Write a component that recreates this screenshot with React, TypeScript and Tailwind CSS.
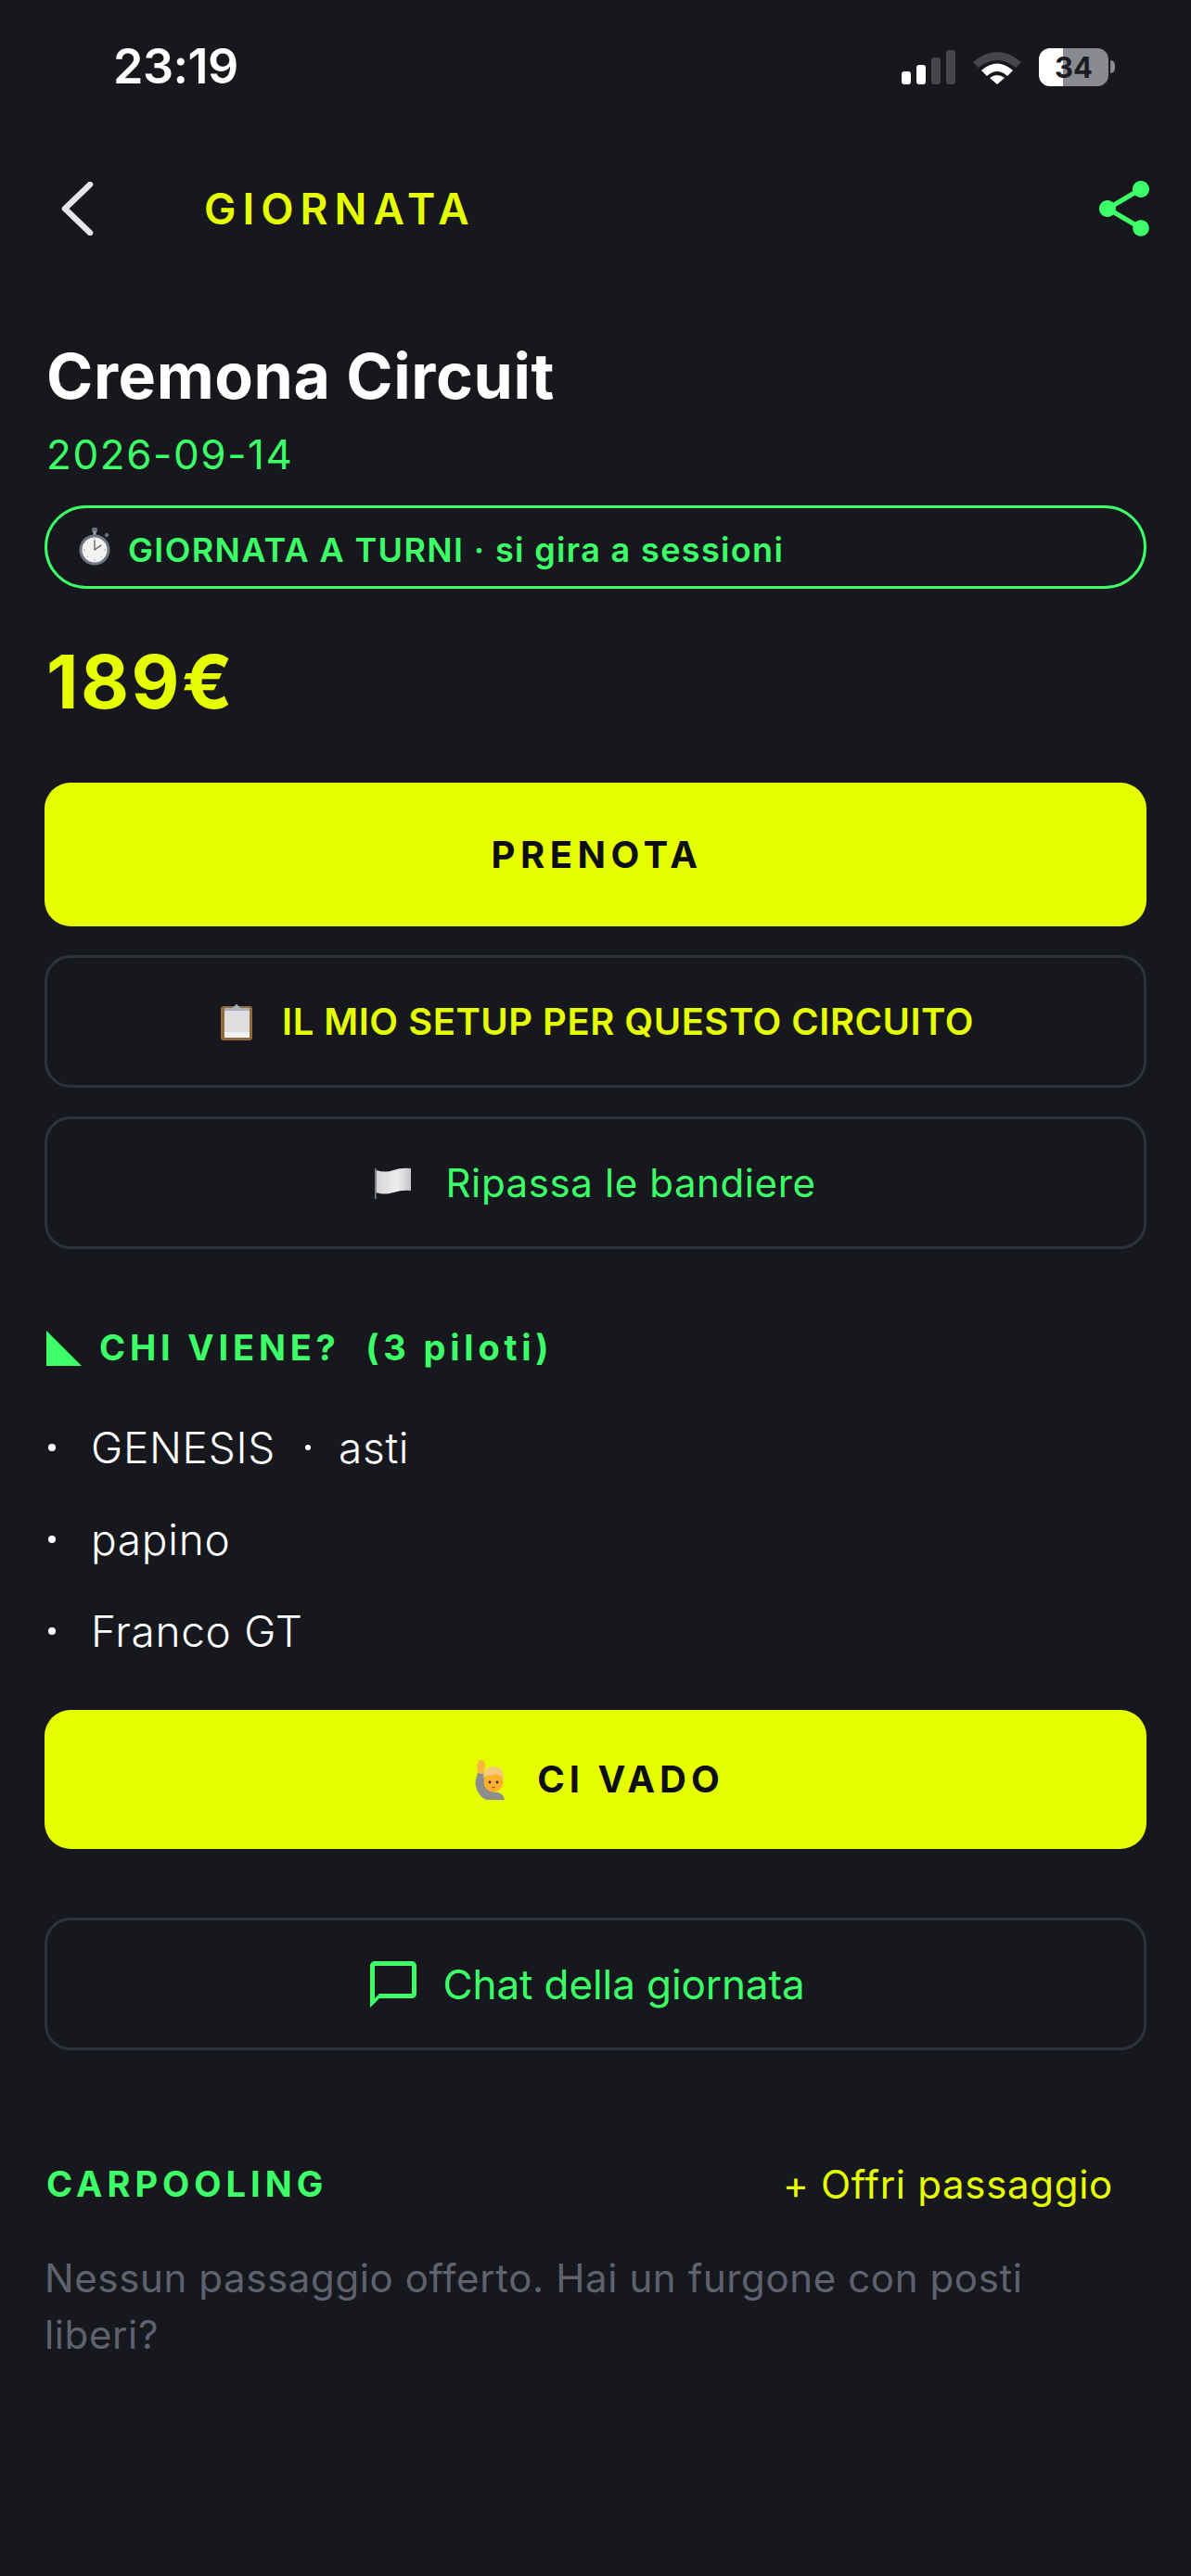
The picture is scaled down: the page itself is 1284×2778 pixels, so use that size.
import { MdChatBubbleOutline, MdShare } from "react-icons/md";

const FONT = "font-['Inter','Liberation_Sans',sans-serif]";

function StopwatchEmoji() {
  return (
    <svg width="36" height="42" viewBox="0 0 36 42" className="shrink-0">
      <rect x="15" y="0" width="6" height="5" rx="1.5" fill="#6b7280" />
      <rect x="16.5" y="4" width="3" height="4" fill="#9ca3af" />
      <rect x="29" y="6" width="4" height="4" rx="1" transform="rotate(40 31 8)" fill="#6b7280" />
      <circle cx="18" cy="24" r="16.5" fill="#6f7684" />
      <circle cx="18" cy="24" r="13.5" fill="#f3f3f1" />
      <path d="M18 24 L18 14 M18 24 L25 19" stroke="#4b5563" strokeWidth="1.2" strokeLinecap="round" />
      <path d="M18 12v2M18 34v2M6 24h2M28 24h2M10 16l1 1M26 32l-1-1M10 32l1-1" stroke="#9ca3af" strokeWidth="1" />
    </svg>
  );
}

function ClipboardEmoji() {
  return (
    <svg width="34" height="40" viewBox="0 0 34 40" className="shrink-0">
      <rect x="0" y="3" width="34" height="37" rx="3" fill="#8f6a3e" />
      <rect x="4" y="8" width="27" height="29" fill="#dedede" />
      <rect x="4" y="31" width="27" height="6" fill="#f1f1f1" />
      <rect x="4" y="5" width="27" height="3" fill="#aab1ba" />
      <path d="M12 5 L15 3 Q17 -1 19 3 L22 5 Z" fill="#aab1ba" />
    </svg>
  );
}

function FlagEmoji() {
  return (
    <svg width="40" height="34" viewBox="0 0 40 34" className="shrink-0">
      <defs>
        <linearGradient id="flag" x1="0" x2="1" y1="0" y2="0">
          <stop offset="0" stopColor="#d4d4d4" />
          <stop offset="0.6" stopColor="#eeeeee" />
          <stop offset="1" stopColor="#c4c4c4" />
        </linearGradient>
      </defs>
      <rect x="0" y="1" width="1.6" height="33" fill="#7b8088" />
      <path d="M1.6 3 Q12 6 20 3 T39 1 V25 Q30 24 20 27 T1.6 27 Z" fill="url(#flag)" />
    </svg>
  );
}

function RaisedHandEmoji() {
  return (
    <svg width="36" height="44" viewBox="0 0 36 44" className="shrink-0">
      {/* braccio e busto */}
      <path d="M2 22 Q0 30 6 38 Q9 43 14 44 H33 Q32 38 26 36 Q18 36 14 30 L11 16 L4 15 Z" fill="#8d8d8d" />
      {/* mano */}
      <path d="M4 15 L3 6 Q3 4 4.500 5 L5 2 Q6 0 7 2 L8 0.500 Q9.500 0 10 2 L11.500 3 Q12.500 4 12 7 L11 16 Z" fill="#f6b93b" />
      {/* testa */}
      <circle cx="21" cy="25" r="10.500" fill="#ffb02e" />
      <path d="M10 24 Q9 8 21 8 Q33 8 32 24 Q30 17 25 16 Q16 18 12 18 Q10 20 10 24 Z" fill="#f5cd7a" />
      <circle cx="17" cy="25" r="1.400" fill="#3b2a1a" />
      <circle cx="25" cy="25" r="1.400" fill="#3b2a1a" />
      <rect x="19" y="30" width="4" height="1.200" fill="#a5641f" />
    </svg>
  );
}

function StatusIcons() {
  return (
    <div className="flex items-center">
      <svg width="58" height="37" viewBox="0 0 58 37">
        <rect x="0" y="23" width="10" height="14" rx="3" fill="#fff" />
        <rect x="16" y="16" width="10" height="21" rx="3" fill="#fff" />
        <rect x="32" y="8" width="10" height="29" rx="3" fill="#45464b" />
        <rect x="48" y="0" width="10" height="37" rx="3" fill="#45464b" />
      </svg>
      <svg width="52" height="37" viewBox="0 0 52 37" className="ml-[19px]">
        <path d="M0 13 Q26 -9 52 13 L46 19 Q26 3 6 19 Z" fill="#45464b" />
        <path d="M9 22 Q26 7 43 22 L37 28 Q26 18 15 28 Z" fill="#fff" />
        <path d="M18 30 Q26 24 34 30 L26 37 Z" fill="#fff" />
      </svg>
      <div className="ml-[19px] flex items-center">
        <div className="flex h-[41px] w-[75px] items-center justify-center rounded-[12px] bg-[linear-gradient(90deg,#fff_35%,#8a8b90_35%)] text-[31px] font-bold leading-none text-[#1a1c22]">
          34
        </div>
        <div className="ml-[2px] h-[14px] w-[5px] rounded-r-full bg-[#8a8b90]" />
      </div>
    </div>
  );
}

export default function App() {
  return (
    <div className={`${FONT} min-h-[2778px] bg-[#16181e] text-white`}>
      <div className="flex h-[144px] items-center justify-between pl-[122px] pr-[82px]">
        <span className="text-[52px] font-semibold leading-none tracking-[-0.5px]">23:19</span>
        <StatusIcons />
      </div>

      <div className="flex h-[162px] items-center pl-[66px] pr-[36px]">
        <svg width="35" height="58" viewBox="0 0 35 58" fill="none" className="shrink-0">
          <path d="M31 3 L4 29 L31 55" stroke="#e5e5ea" strokeWidth="6.5" strokeLinecap="round" strokeLinejoin="round" />
        </svg>
        <span className="ml-[119px] text-[46px] font-semibold leading-none tracking-[7px] text-[#e6ff00]">GIORNATA</span>
        <MdShare className="ml-auto text-[#3dff68]" size={72} />
      </div>

      <div className="px-[48px] pt-[59px]">
        <h1 className="pl-[2px] text-[68px] font-bold leading-[80px] tracking-[0.6px] text-white">Cremona Circuit</h1>
        <p className="mt-[19px] pl-[2px] text-[44px] leading-[52px] tracking-[1.6px] text-[#3dff68]">2026-09-14</p>

        <div className="mt-[29px] flex h-[90px] items-center rounded-full border-[3px] border-[#3dff68] pl-[33px]">
          <StopwatchEmoji />
          <span className="ml-[18px] translate-y-[3px] text-[36px] font-semibold tracking-[1.35px] text-[#3dff68]">GIORNATA A TURNI · si gira a sessioni</span>
        </div>

        <p className="mt-[55px] pl-[2px] text-[80px] font-bold leading-[90px] tracking-[2.5px] text-[#e6ff00]">189€</p>

        <button className="mt-[64px] flex h-[155px] w-full items-center justify-center rounded-[28px] bg-[#e6ff00] pl-[3px] text-[40px] font-bold tracking-[5.5px] text-[#0d0e12]">
          PRENOTA
        </button>

        <button className="mt-[31px] flex h-[143px] w-full items-center justify-center rounded-[28px] border-[3px] border-[#2e323d] pl-[4px] text-[40px] font-semibold tracking-[0.5px] text-[#e6ff00]">
          <ClipboardEmoji />
          <span className="ml-[32px]">IL MIO SETUP PER QUESTO CIRCUITO</span>
        </button>

        <button className="mt-[31px] flex h-[143px] w-full items-center justify-center rounded-[28px] border-[3px] border-[#2e323d] text-[42px] tracking-[0.6px] text-[#3dff68]">
          <FlagEmoji />
          <span className="ml-[36px]">Ripassa le bandiere</span>
        </button>

        <div className="mt-[78px] flex items-center pl-[2px]">
          <svg width="38" height="38" viewBox="0 0 38 38" className="shrink-0">
            <path d="M0 0 L38 38 H0 Z" fill="#3dff68" />
          </svg>
          <span className="ml-[19px] whitespace-pre text-[38px] font-bold tracking-[4.8px] text-[#3dff68]">CHI VIENE?  (3 piloti)</span>
        </div>

        <ul className="mt-[51px] flex flex-col gap-[43px] text-[46px] font-light leading-[56px] tracking-[0.7px]">
          <li className="flex items-center">
            <span className="ml-[4px] h-[8px] w-[8px] rounded-full bg-white" />
            <span className="ml-[38px]">GENESIS</span>
            <span className="ml-[32px] h-[6px] w-[6px] rounded-full bg-white" />
            <span className="ml-[30px]">asti</span>
          </li>
          <li className="flex items-center">
            <span className="ml-[4px] h-[8px] w-[8px] rounded-full bg-white" />
            <span className="ml-[38px]">papino</span>
          </li>
          <li className="flex items-center">
            <span className="ml-[4px] h-[8px] w-[8px] rounded-full bg-white" />
            <span className="ml-[38px]">Franco GT</span>
          </li>
        </ul>

        <button className="mt-[57px] flex h-[150px] w-full items-center justify-center rounded-[28px] bg-[#e6ff00] pl-[8px] text-[40px] font-bold tracking-[5px] text-[#0d0e12]">
          <RaisedHandEmoji />
          <span className="ml-[32px]">CI VADO</span>
        </button>

        <button className="mt-[74px] flex h-[143px] w-full items-center justify-center rounded-[28px] border-[3px] border-[#2e323d] pr-[22px] text-[44px] tracking-[-0.1px] text-[#3dff68]">
          <MdChatBubbleOutline size={60} />
          <span className="ml-[23px]">Chat della giornata</span>
        </button>

        <div className="mt-[113px] flex items-center justify-between pl-[2px] pr-[36px]">
          <span className="text-[38px] font-bold tracking-[5px] text-[#3dff68]">CARPOOLING</span>
          <span className="text-[42px] tracking-[0.7px] text-[#e6ff00]">+ Offri passaggio</span>
        </div>

        <p className="mt-[39px] text-[42px] leading-[61px] tracking-[0.62px] text-[#5f626e]">
          Nessun passaggio offerto. Hai un furgone con posti
          <br />
          liberi?
        </p>
      </div>
    </div>
  );
}
